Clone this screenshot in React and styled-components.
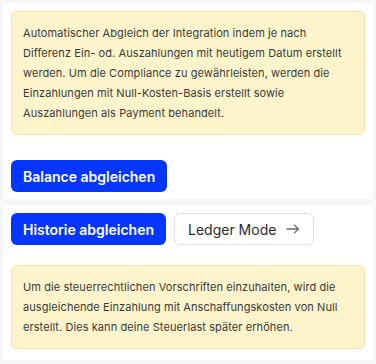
import React from "react";
import styled, { createGlobalStyle } from "styled-components";

const GlobalStyle = createGlobalStyle`
  body {
    margin: 0;
    background: #f5f6f8;
    font-family: Inter, "Noto Sans", sans-serif;
  }
`;

const ArrowIcon = () => (
  <svg width="14" height="10" viewBox="0 0 14 10" fill="none">
    <path
      d="M1 5h11.5M8.5 1.2 12.5 5l-4 3.8"
      stroke="currentColor"
      strokeWidth="1.3"
      strokeLinecap="round"
      strokeLinejoin="round"
    />
  </svg>
);

const App = () => {
  return (
    <>
      <GlobalStyle />
      <Page>
        <Card $gap={25} $bottom={7}>
          <Notice>
            Automatischer Abgleich der Integration indem je nach Differenz Ein-
            od. Auszahlungen mit heutigem Datum erstellt werden. Um die
            Compliance zu gewährleisten, werden die Einzahlungen mit
            Null-Kosten-Basis erstellt sowie Auszahlungen als Payment behandelt.
          </Notice>
          <ActionBar>
            <PrimaryButton>Balance abgleichen</PrimaryButton>
          </ActionBar>
        </Card>
        <Card $gap={20} $bottom={11}>
          <ActionBar>
            <PrimaryButton>Historie abgleichen</PrimaryButton>
            <SecondaryButton>
              Ledger Mode
              <Arrow>
                <ArrowIcon />
              </Arrow>
            </SecondaryButton>
          </ActionBar>
          <Notice>
            Um die steuerrechtlichen Vorschriften einzuhalten, wird die
            ausgleichende Einzahlung mit Anschaffungskosten von Null erstellt.
            Dies kann deine Steuerlast später erhöhen.
          </Notice>
        </Card>
      </Page>
    </>
  );
};

const Page = styled.div`
  display: flex;
  flex-direction: column;
  gap: 6px;
  padding: 3px;
`;

const Card = styled.div`
  display: flex;
  flex-direction: column;
  gap: ${(p) => p.$gap}px;
  background: #ffffff;
  padding: 8px 8px ${(p) => p.$bottom}px 8px;
`;

const Notice = styled.div`
  background: #fef4cb;
  border: 1px solid #f0e3a8;
  border-radius: 6px;
  padding: 11px 11px;
  font-size: 11px;
  letter-spacing: 0.08px;
  line-height: 20px;
  color: #3a3a3a;
`;

const ActionBar = styled.div`
  display: flex;
  gap: 8px;
`;

const PrimaryButton = styled.button`
  height: 32px;
  padding: 0 12px;
  border: none;
  border-radius: 6px;
  background: #0536ff;
  color: #ffffff;
  font-family: Inter, sans-serif;
  font-size: 14px;
  font-weight: 600;
  cursor: pointer;
`;

const SecondaryButton = styled.button`
  display: flex;
  align-items: center;
  gap: 10px;
  height: 32px;
  padding: 0 13px;
  border: 1px solid #e0e0e0;
  border-radius: 6px;
  background: #ffffff;
  color: #2b2b2b;
  font-family: Inter, sans-serif;
  font-size: 14px;
  font-weight: 400;
  cursor: pointer;
`;

const Arrow = styled.span`
  display: flex;
  color: #6b6b6b;
`;

export default App;
